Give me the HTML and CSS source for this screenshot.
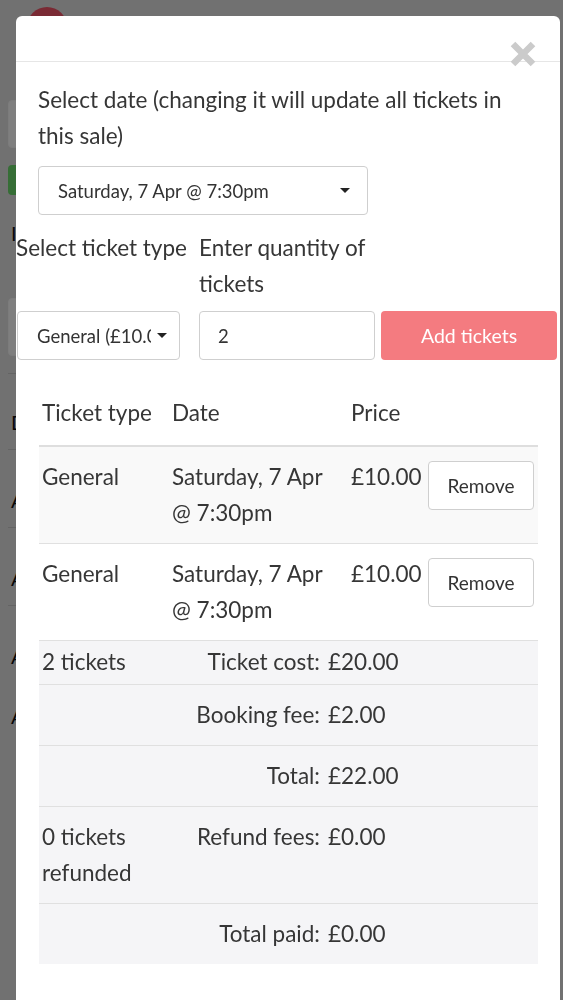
FILE: index.html
```html
<!DOCTYPE html>
<html lang="en">
<head>
<meta charset="utf-8">
<title>Edit sale</title>
<link rel="stylesheet" href="styles.css">
</head>
<body>
<div class="page">
  <div class="pg-logo"></div>
  <div class="pg-box pg-box-1"></div>
  <div class="pg-green"></div>
  <div class="pg-text pg-t1">I</div>
  <div class="pg-box pg-box-2"></div>
  <div class="pg-line"></div>
  <div class="pg-text pg-t2">D</div>
  <div class="pg-line"></div>
  <div class="pg-text pg-a">A</div>
  <div class="pg-line"></div>
  <div class="pg-text pg-a">A</div>
  <div class="pg-line"></div>
  <div class="pg-text pg-a">A</div>
  <div class="pg-text pg-a">A</div>
</div>
<div class="backdrop"></div>
<div class="modal">
  <div class="modal-header">
    <button class="close" aria-label="Close">
      <svg width="28" height="28" viewBox="0 0 28 28"><path d="M4 4 L24 24 M24 4 L4 24" stroke="#cbcbcb" stroke-width="6.5" fill="none"/></svg>
    </button>
  </div>
  <div class="modal-body">
    <div class="date-group">
      <label class="lbl">Select date (changing it will update all tickets in this sale)</label>
      <div class="select select-date"><span>Saturday, 7 Apr @ 7:30pm</span><span class="caret"></span></div>
    </div>
    <div class="add-row">
      <div class="col col-type">
        <label class="lbl nowrap">Select ticket type</label>
        <div class="select select-type"><span class="clip">General (£10.00)</span><span class="caret"></span></div>
      </div>
      <div class="col col-qty">
        <label class="lbl">Enter quantity of tickets</label>
        <div class="input">2</div>
      </div>
      <div class="col col-btn">
        <button class="btn-add">Add tickets</button>
      </div>
    </div>
    <div class="tickets">
      <div class="trow thead">
        <div class="cell">Ticket type</div>
        <div class="cell">Date</div>
        <div class="cell">Price</div>
        <div class="cell"></div>
      </div>
      <div class="trow striped">
        <div class="cell">General</div>
        <div class="cell">Saturday, 7 Apr @ 7:30pm</div>
        <div class="cell">£10.00</div>
        <div class="cell"><button class="btn-remove">Remove</button></div>
      </div>
      <div class="trow">
        <div class="cell">General</div>
        <div class="cell">Saturday, 7 Apr @ 7:30pm</div>
        <div class="cell">£10.00</div>
        <div class="cell"><button class="btn-remove">Remove</button></div>
      </div>
      <div class="srow srow-first">
        <div class="cell">2 tickets</div>
        <div class="cell label">Ticket cost:</div>
        <div class="cell">£20.00</div>
      </div>
      <div class="srow">
        <div class="cell"></div>
        <div class="cell label">Booking fee:</div>
        <div class="cell">£2.00</div>
      </div>
      <div class="srow">
        <div class="cell"></div>
        <div class="cell label">Total:</div>
        <div class="cell">£22.00</div>
      </div>
      <div class="srow">
        <div class="cell">0 tickets refunded</div>
        <div class="cell label">Refund fees:</div>
        <div class="cell">£0.00</div>
      </div>
      <div class="srow">
        <div class="cell"></div>
        <div class="cell label">Total paid:</div>
        <div class="cell">£0.00</div>
      </div>
    </div>
  </div>
</div>
</body>
</html>
```

FILE: styles.css
```css
* { box-sizing: border-box; }
html, body { margin: 0; height: 100%; }
body {
  font-family: Lato, "Noto Sans", sans-serif;
  color: #363636;
  background: #e2e2e2;
  overflow: hidden;
}

/* page behind the modal */
.page { padding: 0 0 0 8px; display: flex; flex-direction: column; }
.pg-logo { width: 40px; height: 40px; border-radius: 50%; background: #f45468; margin: 7px 0 0 19px; }
.pg-box { border: 1px solid #f8f8f8; border-radius: 4px; width: 200px; background: #fff; }
.pg-box-1 { height: 48px; margin-top: 53px; }
.pg-green { width: 120px; height: 30px; border-radius: 4px; background: #6cdc6c; margin-top: 17px; }
.pg-text { font-size: 20px; color: #111; line-height: 20px; padding-left: 3px; }
.pg-t1 { margin-top: 28px; }
.pg-box-2 { height: 58px; margin-top: 55px; }
.pg-line { height: 1px; background: #c8c8c8; width: 300px; margin-top: 17px; }
.pg-t2 { margin-top: 38px; }
.pg-a { margin-top: 40px; }

.backdrop { position: fixed; inset: 0; background: rgba(0, 0, 0, 0.5); }

.modal {
  position: absolute;
  top: 16px;
  left: 16px;
  width: 544px;
  height: 1100px;
  background: #fff;
  border-radius: 6px;
}
.modal-header {
  height: 46px;
  border-bottom: 1px solid #e6e6e6;
  display: flex;
  justify-content: flex-end;
  align-items: flex-start;
  padding-right: 23px;
}
.close { margin-top: 24px; width: 28px; height: 28px; padding: 0; border: 0; background: none; line-height: 0; }

.modal-body { padding: 20px 0 0 22px; }

.lbl { display: block; font-size: 22.5px; line-height: 36px; }
.nowrap { white-space: nowrap; }
.date-group { width: 475px; }

.select, .input {
  height: 49px;
  border: 1px solid #cfcfcf;
  border-radius: 4px;
  background: #fff;
  display: flex;
  align-items: center;
  font-size: 18.5px;
  color: #333;
}
.select-date { width: 330px; margin-top: 12px; padding: 0 17px 0 19px; justify-content: space-between; }
.caret { width: 0; height: 0; border-left: 5px solid transparent; border-right: 5px solid transparent; border-top: 5px solid #222; flex: none; }

.add-row { display: flex; margin: 15px 0 0 -22px; align-items: stretch; }
.col { flex: none; display: flex; flex-direction: column; justify-content: space-between; }
.col-type { width: 164px; }
.col-qty { width: 176px; margin-left: 19px; }
.col-btn { width: 176px; margin-left: 6px; justify-content: flex-end; }
.add-row .lbl { margin-bottom: 9px; }
.select-type { margin-left: 1px; width: 163px; padding: 0 12px 0 19px; }
.select-type .clip { flex: 1; overflow: hidden; white-space: nowrap; margin-right: 6px; }
.input { padding-left: 18px; }
.btn-add {
  width: 100%;
  height: 49px;
  border: 0;
  border-radius: 4px;
  background: #f47b80;
  color: #fff;
  font-family: inherit;
  font-size: 19.5px;
}

.tickets { width: 499px; margin: 25px 0 0 1px; font-size: 22.5px; }
.trow { display: grid; grid-template-columns: 130px 179px 77px 113px; border-top: 1px solid #e0e0e0; }
.trow .cell, .srow .cell { padding: 12px 3px; line-height: 36px; }
.trow .cell:nth-child(2) { padding-right: 10px; }
.thead { border-top: 0; border-bottom: 2px solid #dedede; }
.thead .cell { padding-top: 10px; padding-bottom: 14px; }
.thead + .trow { border-top: 0; }
.striped { background: #f9f9f9; }
.btn-remove {
  width: 106px;
  height: 49px;
  margin-top: 2px;
  border: 1px solid #cfcfcf;
  border-radius: 4px;
  background: #fff;
  font-family: inherit;
  font-size: 19px;
  color: #333;
}
.srow { display: grid; grid-template-columns: 130px 154px 1fr; background: #f5f5f7; border-top: 1px solid #e0e0e0; }
.srow .label { text-align: right; }
.srow .cell:nth-child(3) { padding-left: 5px; }
.srow-first .cell { padding-top: 3px; padding-bottom: 4px; }
```
